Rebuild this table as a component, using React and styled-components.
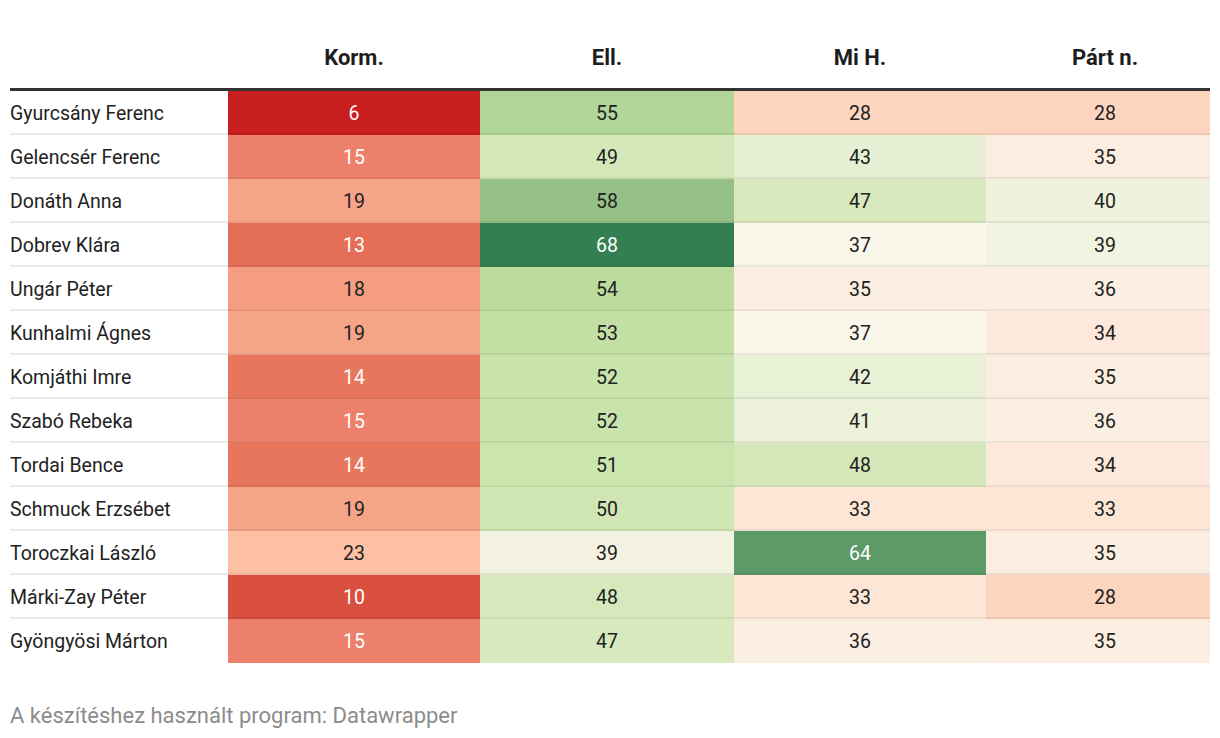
import React from 'react';
import styled, { createGlobalStyle } from 'styled-components';

const GlobalStyle = createGlobalStyle`
    html, body {
        margin: 0;
        padding: 0;
        background: #ffffff;
    }
    body {
        font-family: Roboto, "Liberation Sans", sans-serif;
        color: #222222;
    }
`;

const columns = ['Korm.', 'Ell.', 'Mi H.', 'Párt n.'];

// value + background for each cell, dark cells get white text
const rows = [
    { name: 'Gyurcsány Ferenc', cells: [[6, '#c81e1e', 1], [55, '#b2d69a'], [28, '#fdd4bd'], [28, '#fdd4bd']] },
    { name: 'Gelencsér Ferenc', cells: [[15, '#ed806a', 1], [49, '#d4e8b9'], [43, '#e6efd3'], [35, '#fbede0']] },
    { name: 'Donáth Anna', cells: [[19, '#f6a487'], [58, '#95c187'], [47, '#d9e9be'], [40, '#f0f2de']] },
    { name: 'Dobrev Klára', cells: [[13, '#e56e56', 1], [68, '#337f52', 1], [37, '#f9f6ea'], [39, '#f2f3e0']] },
    { name: 'Ungár Péter', cells: [[18, '#f49d80'], [54, '#bcdc9e'], [35, '#fbede0'], [36, '#fbeee2']] },
    { name: 'Kunhalmi Ágnes', cells: [[19, '#f6a487'], [53, '#c2dfa4'], [37, '#f9f6ea'], [34, '#fde9dc']] },
    { name: 'Komjáthi Imre', cells: [[14, '#e7765d', 1], [52, '#c8e3ab'], [42, '#e8f0d6'], [35, '#fbede0']] },
    { name: 'Szabó Rebeka', cells: [[15, '#ed806a', 1], [52, '#c8e3ab'], [41, '#ecf1da'], [36, '#fbeee2']] },
    { name: 'Tordai Bence', cells: [[14, '#e7765d', 1], [51, '#cbe5ae'], [48, '#d5e8ba'], [34, '#fde9dc']] },
    { name: 'Schmuck Erzsébet', cells: [[19, '#f6a487'], [50, '#d0e7b3'], [33, '#fde6d6'], [33, '#fde6d6']] },
    { name: 'Toroczkai László', cells: [[23, '#fdc0a4'], [39, '#f3f2e0'], [64, '#5c9a67', 1], [35, '#fbede0']] },
    { name: 'Márki-Zay Péter', cells: [[10, '#d9503e', 1], [48, '#d7e9bc'], [33, '#fde6d6'], [28, '#fdd4bd']] },
    { name: 'Gyöngyösi Márton', cells: [[15, '#ed806a', 1], [47, '#d9e9be'], [36, '#fbeee2'], [35, '#fbede0']] },
];

const Wrapper = styled.div`
    padding: 0 10px;
    width: 1200px;
`;

const Table = styled.div`
    display: grid;
    grid-template-columns: 218px 252px 254px 252px 224px;
`;

const HeadCell = styled.div`
    height: 91px;
    box-sizing: border-box;
    display: flex;
    align-items: flex-end;
    justify-content: center;
    padding-bottom: 18px;
    padding-left: ${p => (p.$last ? '14px' : '0')};
    border-bottom: 3px solid #333333;
    font-weight: 700;
    font-size: 22px;
    color: #1d1d1d;
`;

const NameCell = styled.div`
    height: 44px;
    box-sizing: border-box;
    display: flex;
    align-items: center;
    font-size: 19.5px;
    color: #222222;
    border-bottom: ${p => (p.$end ? 'none' : '2px solid #ebebeb')};
    padding-top: ${p => (p.$end ? '0' : '2px')};
`;

const ValueCell = styled.div`
    height: 44px;
    box-sizing: border-box;
    display: flex;
    align-items: center;
    justify-content: center;
    padding-left: ${p => (p.$last ? '14px' : '0')};
    padding-top: ${p => (p.$end ? '0' : '2px')};
    font-size: 19.5px;
    background: ${p => p.$bg};
    color: ${p => (p.$light ? '#ffffff' : '#222222')};
    border-bottom: ${p => (p.$end ? 'none' : '2px solid rgba(0, 0, 0, 0.06)')};
`;

const Footer = styled.div`
    margin-top: 40px;
    font-size: 22px;
    color: #8c8c8c;
`;

const App = () => {
    return (
        <Wrapper>
            <GlobalStyle />
            <Table>
                <HeadCell />
                {columns.map((col, i) => (
                    <HeadCell key={col} $last={i === columns.length - 1}>{col}</HeadCell>
                ))}
                {rows.map((row, ri) => {
                    const end = ri === rows.length - 1;
                    return (
                        <React.Fragment key={row.name}>
                            <NameCell $end={end}>{row.name}</NameCell>
                            {row.cells.map(([value, bg, light], ci) => (
                                <ValueCell
                                    key={`c_${ci}`}
                                    $bg={bg}
                                    $light={!!light}
                                    $last={ci === row.cells.length - 1}
                                    $end={end}
                                >
                                    {value}
                                </ValueCell>
                            ))}
                        </React.Fragment>
                    );
                })}
            </Table>
            <Footer>A készítéshez használt program: Datawrapper</Footer>
        </Wrapper>
    );
};

export default App;
